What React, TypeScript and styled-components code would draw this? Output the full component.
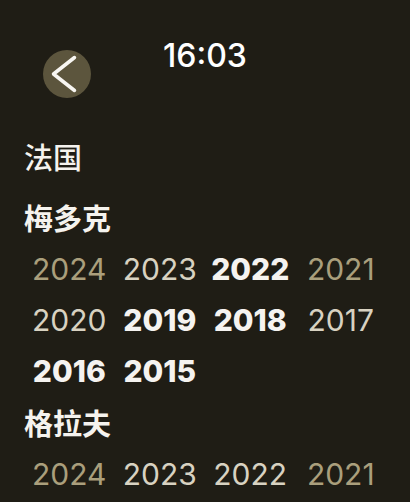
import React from "react";
import styled, { createGlobalStyle } from "styled-components";

const GlobalStyle = createGlobalStyle`
  *, *::before, *::after { box-sizing: border-box; }
  body {
    margin: 0;
    background: #1f1d15;
    color: #f5f3ee;
    font-family: Inter, "Noto Sans CJK SC", sans-serif;
  }
`;

const Screen = styled.main`
  min-height: 100vh;
  padding: 40px 24px 0;
  overflow: hidden;
`;

const Header = styled.header`
  display: grid;
  grid-template-columns: 1fr auto 1fr;
  align-items: start;
  height: 97px;
`;

const BackButton = styled.button`
  display: grid;
  place-items: center;
  width: 48px;
  height: 48px;
  margin: 10px 0 0 19px;
  padding: 0;
  border: 0;
  border-radius: 50%;
  background: #5c553d;
  color: #f8f6f2;
`;

const Clock = styled.time`
  font-size: 32px;
  line-height: 32px;
  font-weight: 500;
  color: #ffffff;
`;

const Country = styled.h1`
  margin: 0 0 11px;
  font-size: 29px;
  line-height: 44px;
  font-weight: 500;
`;

const RegionName = styled.h2`
  margin: 0;
  font-size: 29px;
  line-height: 48px;
  font-weight: 700;
`;

const Region = styled.section`
  padding-top: 4px;
`;

const Years = styled.ul`
  display: grid;
  grid-template-columns: repeat(4, 1fr);
  margin: 0;
  padding: 0;
  list-style: none;
`;

type Rating = "faded" | "normal" | "great";

const colors: Record<Rating, string> = {
  faded: "#aa9f7c",
  normal: "#d8d2c1",
  great: "#f5f3f0",
};

const Year = styled.li<{ $rating: Rating }>`
  text-align: center;
  font-size: 30px;
  line-height: 51px;
  font-weight: ${(p) => (p.$rating === "great" ? 800 : 400)};
  color: ${(p) => colors[p.$rating]};
`;

const regions: { name: string; years: [number, Rating][] }[] = [
  {
    name: "梅多克",
    years: [
      [2024, "faded"], [2023, "normal"], [2022, "great"], [2021, "faded"],
      [2020, "normal"], [2019, "great"], [2018, "great"], [2017, "normal"],
      [2016, "great"], [2015, "great"],
    ],
  },
  {
    name: "格拉夫",
    years: [[2024, "faded"], [2023, "normal"], [2022, "normal"], [2021, "faded"]],
  },
];

export default function App() {
  return (
    <Screen>
      <GlobalStyle />
      <Header>
        <BackButton type="button" aria-label="返回">
          <svg width="48" height="48" viewBox="0 0 48 48" fill="none" stroke="currentColor" strokeWidth="3.5" strokeLinecap="round" strokeLinejoin="round" aria-hidden="true">
            <path d="M31.5 7.5 L10.5 24 L31.5 40.5" />
          </svg>
        </BackButton>
        <Clock>16:03</Clock>
      </Header>
      <Country>法国</Country>
      {regions.map((region) => (
        <Region key={region.name}>
          <RegionName>{region.name}</RegionName>
          <Years>
            {region.years.map(([year, rating]) => (
              <Year key={year} $rating={rating}>{year}</Year>
            ))}
          </Years>
        </Region>
      ))}
    </Screen>
  );
}
